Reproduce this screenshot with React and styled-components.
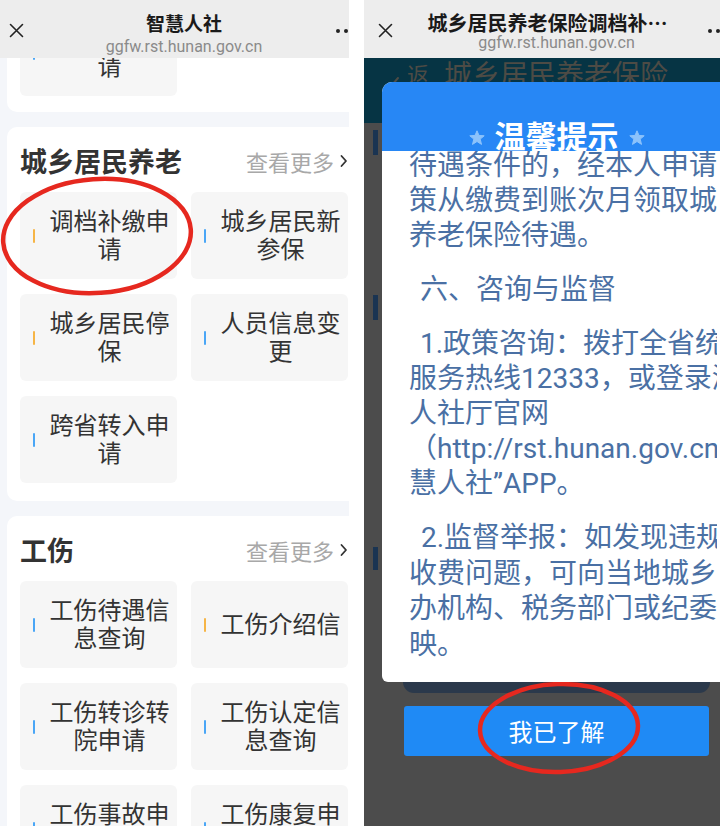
import React from 'react';
import styled, { createGlobalStyle } from 'styled-components';

const GlobalStyle = createGlobalStyle`
  html, body {
    margin: 0;
    padding: 0;
    background: #ffffff;
  }
  body {
    font-family: "Noto Sans CJK SC", "Noto Sans", sans-serif;
  }
  * { box-sizing: border-box; }
`;

const Canvas = styled.div`
  position: relative;
  width: 720px;
  height: 826px;
  display: flex;
  gap: 15px;
  background: #ffffff;
  overflow: hidden;
`;

const Phone = styled.div`
  width: ${p => p.$visible}px;
  height: 826px;
  flex-shrink: 0;
  overflow: hidden;
`;

const Screen = styled.div`
  width: ${p => p.$width}px;
  height: 100%;
  display: flex;
  flex-direction: column;
  background: ${p => p.$bg};
`;

/* ---------- browser top bar ---------- */

const TopBar = styled.header`
  height: 58px;
  flex-shrink: 0;
  background: #ededed;
  display: grid;
  grid-template-columns: 50px 1fr 50px;
`;

const CloseCell = styled.div`
  display: flex;
  align-items: center;
  padding-left: ${p => p.$left}px;
  padding-top: 2px;
`;

const TitleBlock = styled.div`
  display: flex;
  flex-direction: column;
  align-items: center;
  padding-top: 11px;
`;

const PageTitle = styled.div`
  font-size: ${p => p.$size}px;
  line-height: 24px;
  font-weight: 700;
  color: #1a1a1a;
  white-space: nowrap;
  margin-right: ${p => p.$shift}px;
`;

const PageUrl = styled.div`
  margin-top: ${p => p.$gap}px;
  font-family: "Roboto", "Noto Sans", sans-serif;
  font-size: 16px;
  line-height: 20px;
  color: #8a8a8a;
  white-space: nowrap;
`;

const DotsCell = styled.div`
  display: flex;
  align-items: center;
  gap: 4px;
  padding-left: ${p => p.$left}px;
  padding-top: 4px;
`;

const Dot = styled.span`
  width: 4px;
  height: 4px;
  border-radius: 50%;
  background: #222;
`;

/* ---------- left phone: service list ---------- */

const Viewport = styled.div`
  flex: 1;
  overflow: hidden;
`;

const Feed = styled.div`
  margin-top: -114px;
  padding: 0 7px;
  display: flex;
  flex-direction: column;
  gap: 15px;
`;

const Card = styled.section`
  background: #ffffff;
  border-radius: 10px;
  padding: 13px 13px ${p => p.$bottom}px;
`;

const CardHead = styled.div`
  height: 42px;
  margin-bottom: 10px;
  display: flex;
  align-items: center;
  justify-content: space-between;
`;

const CardTitle = styled.h2`
  margin: 0;
  font-size: 27px;
  line-height: 40px;
  font-weight: 700;
  color: #333333;
`;

const More = styled.span`
  display: flex;
  align-items: center;
  gap: 6px;
  font-size: 22px;
  line-height: 40px;
  color: #a8a8a8;
`;

const TileGrid = styled.div`
  display: grid;
  grid-template-columns: repeat(2, 157px);
  column-gap: 14px;
  row-gap: 15px;
`;

const Tile = styled.div`
  height: 87px;
  border-radius: 6px;
  background: #f6f6f6;
  display: flex;
  align-items: center;
  padding: 0 1px 0 13px;
`;

const Marker = styled.span`
  width: 2px;
  height: 14px;
  border-radius: 1px;
  flex-shrink: 0;
  background: ${p => (p.$tone === 'orange' ? '#f6b546' : '#4aa6f6')};
`;

const TileText = styled.span`
  flex: 1;
  margin-left: 8px;
  margin-top: -3px;
  text-align: center;
  font-size: 24px;
  line-height: 28px;
  color: #333333;
`;

/* ---------- right phone: dialog ---------- */

const Backdrop = styled.div`
  flex: 1;
  position: relative;
  background: #4c4c4c;
  overflow: hidden;
`;

const PageBar = styled.div`
  height: 65px;
  background: #063444;
  display: flex;
  align-items: flex-start;
  padding-left: 26px;
  color: #4d4b45;
`;

const BackWord = styled.span`
  margin-left: 7px;
  font-size: 22px;
  line-height: 30px;
`;

const BarTitle = styled.span`
  margin-left: 15px;
  font-size: 28px;
  line-height: 30px;
`;

const SectionStub = styled.div`
  margin: ${p => p.$top}px 0 0 9px;
  width: 5px;
  height: ${p => p.$h}px;
  background: #1a3452;
`;

const Overlay = styled.div`
  position: absolute;
  inset: 0;
  display: flex;
  flex-direction: column;
  align-items: center;
  padding-top: 24px;
`;

const Modal = styled.div`
  position: relative;
  z-index: 1;
  width: 349px;
  height: 600px;
  flex-shrink: 0;
  background: #ffffff;
  border-radius: 10px 10px 6px 6px;
  overflow: hidden;
  display: flex;
  flex-direction: column;
`;

const ModalHead = styled.div`
  height: 69px;
  flex-shrink: 0;
  background: #2787f5;
  display: flex;
  align-items: flex-end;
  justify-content: center;
  gap: 10px;
`;

const ModalTitle = styled.h3`
  margin: 0;
  font-size: 31px;
  line-height: 32px;
  font-weight: 700;
  color: #ffffff;
`;

const StarIcon = styled.svg`
  width: 16px;
  height: 16px;
  margin-bottom: 5px;
`;

const ModalBody = styled.div`
  flex: 1;
  padding-left: 27px;
  overflow: hidden;
`;

const TextColumn = styled.div`
  width: 308px;
  height: 100%;
  overflow: hidden;
  color: #4a70a4;
  font-family: "Roboto", "Noto Sans CJK SC", sans-serif;
`;

const Para = styled.div`
  margin-top: ${p => p.$top || 0}px;
  margin-bottom: 19px;
`;

const Line = styled.div`
  font-size: 28px;
  line-height: ${p => p.$lh || 35}px;
  white-space: nowrap;
  padding-left: ${p => p.$indent || 0}px;
`;

const ModalFoot = styled.div`
  width: 307px;
  height: 11px;
  flex-shrink: 0;
  background: #2b394b;
  border-radius: 0 0 12px 12px;
`;

const ConfirmButton = styled.button`
  margin-top: 13px;
  width: 305px;
  height: 50px;
  flex-shrink: 0;
  border: none;
  border-radius: 3px;
  background: #1f8af5;
  color: #ffffff;
  font-family: "Noto Sans CJK SC", sans-serif;
  font-size: 24px;
  line-height: 50px;
  padding: 0;
`;

const Annotations = styled.svg`
  position: absolute;
  inset: 0;
  pointer-events: none;
`;

/* ---------- data ---------- */

const sections = [
  {
    title: '企业职工养老',
    bottom: 16,
    items: [{ text: '关系转续申请', tone: 'blue' }],
  },
  {
    title: '城乡居民养老',
    bottom: 18,
    items: [
      { text: '调档补缴申请', tone: 'orange' },
      { text: '城乡居民新参保', tone: 'blue' },
      { text: '城乡居民停保', tone: 'orange' },
      { text: '人员信息变更', tone: 'blue' },
      { text: '跨省转入申请', tone: 'blue' },
    ],
  },
  {
    title: '工伤',
    bottom: 18,
    items: [
      { text: '工伤待遇信息查询', tone: 'blue' },
      { text: '工伤介绍信', tone: 'orange' },
      { text: '工伤转诊转院申请', tone: 'blue' },
      { text: '工伤认定信息查询', tone: 'blue' },
      { text: '工伤事故申报', tone: 'blue' },
      { text: '工伤康复申请', tone: 'blue' },
    ],
  },
];

const notice = [
  {
    top: -3,
    lines: ['待遇条件的，经本人申请，按政', '策从缴费到账次月领取城乡居民', '养老保险待遇。'],
  },
  { indent: 11, lines: ['六、咨询与监督'] },
  {
    indent: 11,
    lines: [
      '1.政策咨询：拨打全省统一的人社',
      '服务热线12333，或登录湖南省',
      '人社厅官网',
      '（http://rst.hunan.gov.cn）或“智',
      '慧人社”APP。',
    ],
  },
  {
    indent: 12,
    lh: 35.5,
    lines: ['2.监督举报：如发现违规', '收费问题，可向当地城乡居民', '办机构、税务部门或纪委监委', '映。'],
  },
];

/* ---------- pieces ---------- */

const CloseIcon = () => (
  <svg width="15" height="15" viewBox="0 0 15 15">
    <path d="M1.5 1.5 L13.5 13.5 M13.5 1.5 L1.5 13.5" stroke="#222" strokeWidth="1.6" strokeLinecap="round" />
  </svg>
);

const Star = () => (
  <StarIcon viewBox="0 0 16 16">
    <polygon
      points="8,0.8 10,5.4 15.2,5.8 11.2,9.1 12.5,14.4 8,11.5 3.5,14.4 4.8,9.1 0.8,5.8 6,5.4"
      fill="#8cc2fb"
      stroke="#8cc2fb"
      strokeWidth="1"
      strokeLinejoin="round"
    />
  </StarIcon>
);

const BrowserBar = ({ title, size, closeLeft, dotsLeft, urlGap, titleShift }) => (
  <TopBar>
    <CloseCell $left={closeLeft}>
      <CloseIcon />
    </CloseCell>
    <TitleBlock>
      <PageTitle $size={size} $shift={titleShift}>{title}</PageTitle>
      <PageUrl $gap={urlGap}>ggfw.rst.hunan.gov.cn</PageUrl>
    </TitleBlock>
    <DotsCell $left={dotsLeft}>
      <Dot />
      <Dot />
      <Dot />
    </DotsCell>
  </TopBar>
);

const ServiceCard = ({ title, items, bottom }) => (
  <Card $bottom={bottom}>
    <CardHead>
      <CardTitle>{title}</CardTitle>
      <More>
        查看更多
        <svg width="8" height="14" viewBox="0 0 8 14">
          <path d="M1.5 2 L6 7 L1.5 12" fill="none" stroke="#333" strokeWidth="1.8" strokeLinecap="round" strokeLinejoin="round" />
        </svg>
      </More>
    </CardHead>
    <TileGrid>
      {items.map(item => (
        <Tile key={item.text}>
          <Marker $tone={item.tone} />
          <TileText>{item.text}</TileText>
        </Tile>
      ))}
    </TileGrid>
  </Card>
);

export default function App() {
  return (
    <>
      <GlobalStyle />
      <Canvas>
        <Phone $visible={349}>
          <Screen $width={368} $bg="#f4f6fa">
            <BrowserBar title="智慧人社" size={19} closeLeft={9} dotsLeft={18} urlGap={2} titleShift={0} />
            <Viewport>
              <Feed>
                {sections.map(s => (
                  <ServiceCard key={s.title} {...s} />
                ))}
              </Feed>
            </Viewport>
          </Screen>
        </Phone>

        <Phone $visible={356}>
          <Screen $width={385} $bg="#4c4c4c">
            <BrowserBar
              title="城乡居民养老保险调档补…"
              size={20}
              closeLeft={14}
              dotsLeft={9}
              urlGap={-2}
              titleShift={18}
            />
            <Backdrop>
              <PageBar>
                <svg width="10" height="18" viewBox="0 0 10 18" style={{ marginTop: 18 }}>
                  <path d="M8 2 L2 9 L8 16" fill="none" stroke="#4d4b45" strokeWidth="2" strokeLinecap="round" />
                </svg>
                <BackWord>返</BackWord>
                <BarTitle>城乡居民养老保险</BarTitle>
              </PageBar>
              <SectionStub $top={7} $h={25} />
              <SectionStub $top={140} $h={25} />
              <SectionStub $top={227} $h={23} />

              <Overlay>
                <Modal>
                  <ModalHead>
                    <Star />
                    <ModalTitle>温馨提示</ModalTitle>
                    <Star />
                  </ModalHead>
                  <ModalBody>
                    <TextColumn>
                      {notice.map((p, i) => (
                        <Para key={i} $top={p.top}>
                          {p.lines.map((l, j) => (
                            <Line key={j} $indent={j === 0 ? p.indent : 0} $lh={p.lh}>
                              {l}
                            </Line>
                          ))}
                        </Para>
                      ))}
                    </TextColumn>
                  </ModalBody>
                </Modal>
                <ModalFoot />
                <ConfirmButton>我已了解</ConfirmButton>
              </Overlay>
            </Backdrop>
          </Screen>
        </Phone>

        <Annotations width="720" height="826" viewBox="0 0 720 826">
          <ellipse cx="97" cy="236" rx="94" ry="57" transform="rotate(-4 97 236)" fill="none" stroke="#e6281f" strokeWidth="4.5" />
          <ellipse cx="559" cy="728" rx="79" ry="44" transform="rotate(-2 559 728)" fill="none" stroke="#e6281f" strokeWidth="4.5" />
        </Annotations>
      </Canvas>
    </>
  );
}
